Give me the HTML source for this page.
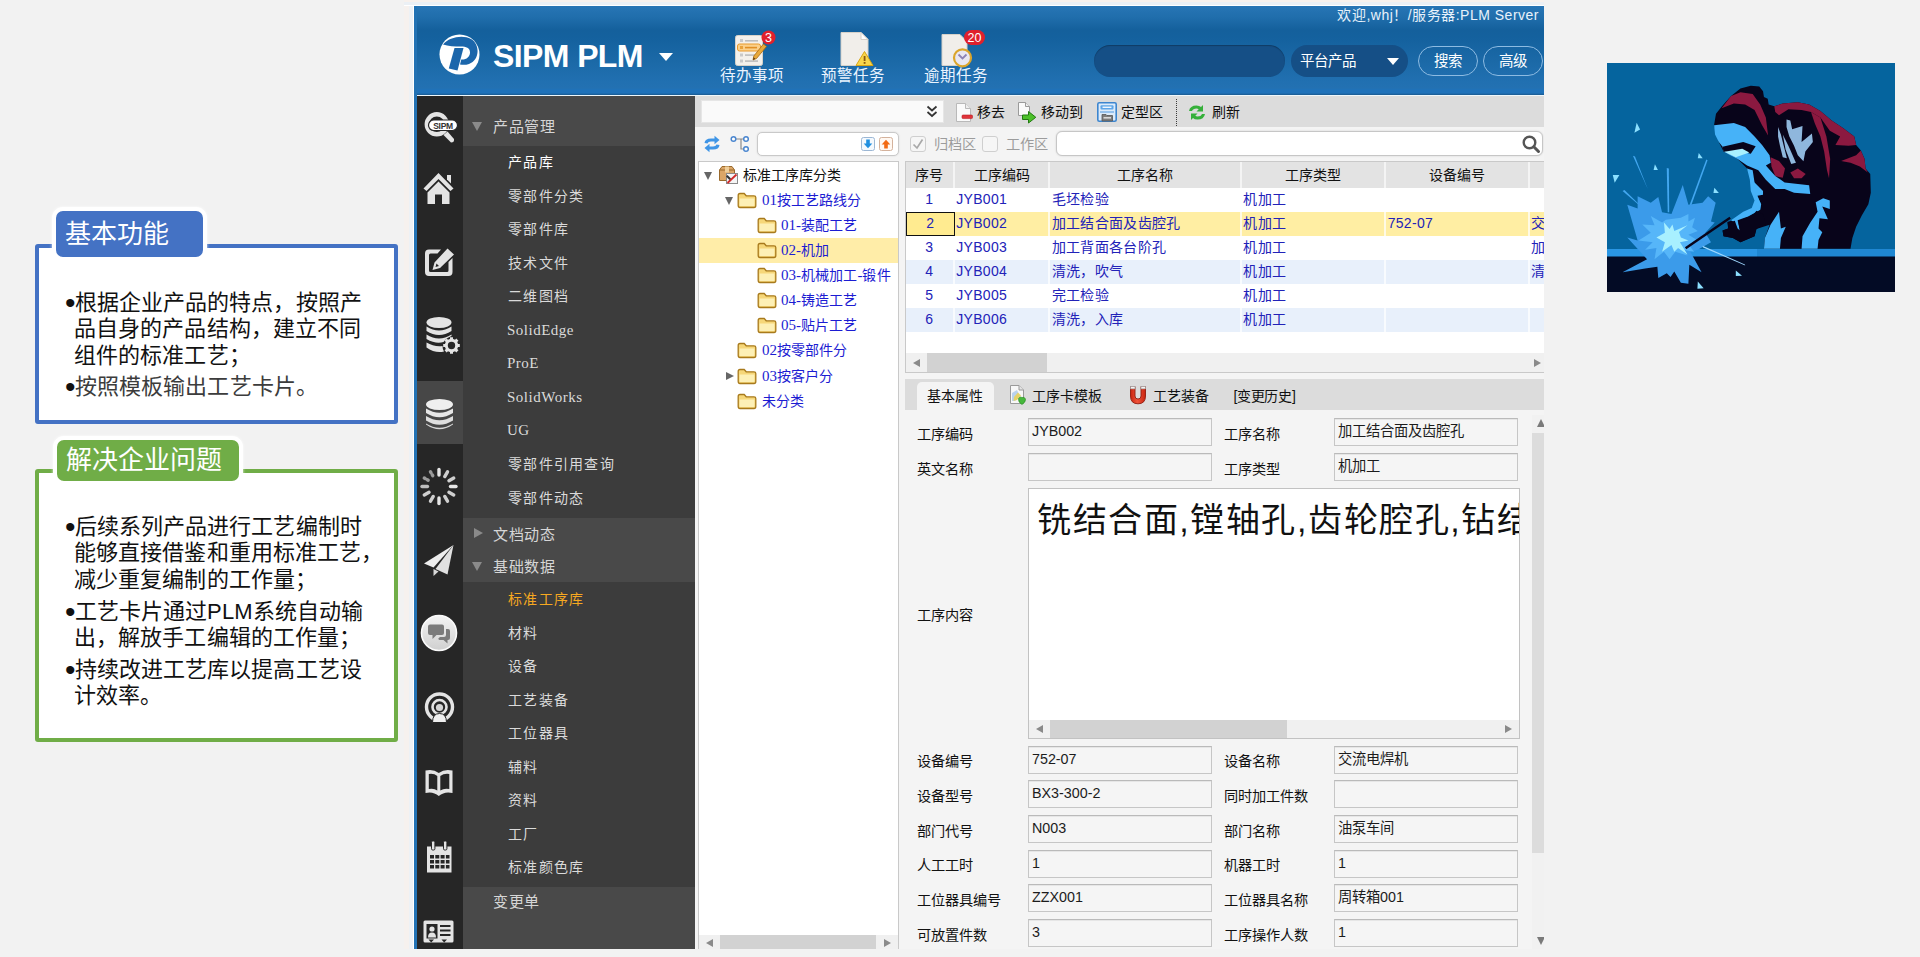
<!DOCTYPE html>
<html lang="zh-CN">
<head>
<meta charset="utf-8">
<title>SIPM PLM</title>
<style>
*{box-sizing:border-box;margin:0;padding:0}
html,body{width:1920px;height:957px;overflow:hidden;background:#f2f2f2;font-family:"Liberation Sans",sans-serif;}
.abs{position:absolute}
/* ---------- left callout boxes ---------- */
.box{position:absolute;left:35px;width:363px;background:#fff;border-radius:3px}
.box.b1{top:244px;height:180px;border:4px solid #4472c4}
.box.b2{top:469px;height:273px;border:4px solid #70ad47}
.lab{position:absolute;color:#fff;font-size:26px;line-height:46px;border:4px solid #fff;border-radius:11px;white-space:nowrap;box-shadow:0 0 3px rgba(255,255,255,.9)}
.lab.l1{left:52px;top:207px;width:155px;height:54px;background:#4472c4;padding-left:9px}
.lab.l2{left:53px;top:436px;width:190px;height:49px;background:#70ad47;padding-left:9px;line-height:40px}
.bul{position:absolute;left:65px;font-size:22px;line-height:26.3px;color:#111;white-space:nowrap;letter-spacing:.1px}
.bul .bu{font-weight:normal;font-size:30px;line-height:20px;vertical-align:-3px;letter-spacing:0;margin-right:-1px;font-family:"Liberation Sans",sans-serif}
.bul .in{padding-left:9px;display:block}
.bul .kai{font-family:"Liberation Serif",serif;color:#3c3c3c;letter-spacing:.15px}
.bul .kai .bu{color:#111}
/* ---------- app frame ---------- */
#app{position:absolute;left:414px;top:6px;width:1130px;height:943px;background:#f4f4f4;overflow:hidden}
#lb{position:absolute;left:0;top:0;width:2.5px;height:943px;background:#2272b4;z-index:5}
#hdr{position:absolute;left:0;top:0;width:1130px;height:89px;background:linear-gradient(#2775b5 0,#206eac 11px,#14609c 24px,#14619e 32px,#1b69a7 55px,#2170b1 76px,#2371b2 82px,#1f72ba 84px,#1f72ba 87px,#1b5f99 88.500px,#1b5f99 89px)}
#hl{position:absolute;left:0;top:89px;width:1130px;height:1px;background:#eef7fc}

/* ---------- header ---------- */
#logo{position:absolute;left:25px;top:28px;width:41px;height:41px}
#ttl{position:absolute;left:79px;top:31.5px;font-size:32px;font-weight:bold;color:#fff;line-height:36px;letter-spacing:-0.6px;white-space:nowrap}
#tri{position:absolute;left:245px;top:47px;width:0;height:0;border-left:7px solid transparent;border-right:7px solid transparent;border-top:8px solid #fff}
.hi{position:absolute;top:62px;width:80px;text-align:center;color:#eaf4ff;font-size:15.5px;line-height:16px;white-space:nowrap;letter-spacing:0}
.hico{position:absolute}
#wel{position:absolute;right:5px;top:1px;color:#e8f2fb;font-size:14px;line-height:16px;white-space:nowrap;letter-spacing:0.5px}
#sin{position:absolute;left:680px;top:39px;width:191px;height:32px;border-radius:16px;background:#154f86;box-shadow:inset 0 1px 1px rgba(0,0,0,.25)}
#sel{position:absolute;left:877px;top:39px;width:117px;height:32px;border-radius:16px;background:#154f86;color:#fff;font-size:14.5px;line-height:32px;padding-left:9px}
#sel i{position:absolute;left:96px;top:13px;width:0;height:0;border-left:6px solid transparent;border-right:6px solid transparent;border-top:7px solid #fff}
.hb{position:absolute;top:40px;width:60px;height:30px;border-radius:15px;border:1px solid #8dbbe2;color:#fff;font-size:14.5px;line-height:28px;text-align:center}

/* ---------- sidebar ---------- */
#strip{position:absolute;left:2px;top:90px;width:47px;height:853px;background:#262626}
#strip .sel{position:absolute;left:0;top:285px;width:47px;height:63px;background:#474747}
#strip svg{position:absolute;left:0;top:0}
#menu{position:absolute;left:49px;top:90px;width:232px;height:853px;background:#3c3c3c;color:#dadada;font-size:14px;letter-spacing:1.3px;white-space:nowrap}
#menu .h{position:absolute;left:0;width:232px;background:#494949;color:#d6d6d6}
#menu .h span{position:absolute;left:30px;font-size:15px;letter-spacing:.6px}
#menu .h i{position:absolute;left:9px;width:0;height:0}
#menu .h i.d{border-left:5.5px solid transparent;border-right:5.5px solid transparent;border-top:9px solid #8a8a8a}
#menu .h i.r{border-top:5.5px solid transparent;border-bottom:5.5px solid transparent;border-left:9px solid #8a8a8a;left:11px}
#menu .it{position:absolute;left:45px;height:20px;line-height:20px}
#menu .it.s{font-family:"Liberation Serif",serif;font-size:15px;letter-spacing:.5px;left:44px}
#menu .it.o{color:#f6a821}

/* ---------- main panel ---------- */
#main{position:absolute;left:281px;top:90px;width:849px;height:853px;background:#f4f4f4;font-size:14px;color:#111;white-space:nowrap}
#tb1{position:absolute;left:0;top:0;width:849px;height:31px;background:#dcdcdc}
#combo{position:absolute;left:6px;top:4px;width:243px;height:23px;background:#fafafa;border:1px solid #e6e6e6}
.tbt{position:absolute;top:8px;line-height:16px;font-size:14px;color:#111}
.tbi{position:absolute}
#tin{position:absolute;left:62px;top:36px;width:142px;height:24px;border:1px solid #c9c9c9;border-radius:5px;background:#fff;box-shadow:0 0 2px rgba(0,0,0,.12)}
#sin2{position:absolute;left:361px;top:35px;width:487px;height:25px;border:1px solid #c6c6c6;border-radius:6px;background:#fff;box-shadow:0 0 2px rgba(0,0,0,.15)}
.cb{position:absolute;top:40px;width:16px;height:16px;border:1px solid #cfcfcf;border-radius:3px;background:#f6f6f6}
.cbl{position:absolute;top:40px;line-height:16px;color:#9c9c9c;font-size:14.2px}

/* ---------- tree ---------- */
#tree{position:absolute;left:3px;top:65px;width:201px;height:788px;background:#fff;border:1px solid #c9c9c9;border-bottom:none;overflow:hidden}
#tree .r{position:absolute;left:0;width:199px;height:25px;line-height:25px;font-size:14px;color:#1c1cd2;letter-spacing:.1px}
#tree .r.sel{background:#ffeda8}
#tree .r span{position:absolute;top:0}
#tree .r span b{font-weight:normal;font-family:"Liberation Serif",serif;font-size:15px;letter-spacing:0}
#tree .r svg{position:absolute}
.tri-d{position:absolute;width:0;height:0;border-left:4.5px solid transparent;border-right:4.5px solid transparent;border-top:8px solid #666}
.tri-r{position:absolute;width:0;height:0;border-top:4.5px solid transparent;border-bottom:4.5px solid transparent;border-left:8px solid #666}
.hsb{position:absolute;background:#f0f0f0}
.hsb i{position:absolute;top:0;background:#d2d2d2}
.arr{position:absolute;width:0;height:0}
/* ---------- grid ---------- */
#grid{position:absolute;left:210px;top:65px;width:639px;height:212px;background:#fff;border:1px solid #c9c9c9;border-right:none;overflow:hidden}
#grid .hd{position:absolute;left:0;top:0;height:25.5px;width:640px;background:#e3e3e3}
#grid .hd div{position:absolute;top:0;height:25.5px;line-height:26px;text-align:center;font-size:14px;color:#111;border-right:2px solid #f4f4f4}
#grid .row{position:absolute;left:0;width:640px;height:24px;line-height:23px;font-size:14px;letter-spacing:.3px;color:#2222b8}
#grid .row div{position:absolute;top:0;height:24px;border-right:2px solid rgba(255,255,255,.7)}
#grid .row.a{background:#e8f0fb}
#grid .row.y{background:#ffeea3}

/* ---------- tabs + form ---------- */
#tabs{position:absolute;left:210px;top:283px;width:639px;height:31px;background:#dcdcdc}
#tabs .act{position:absolute;left:12px;top:3px;width:77px;height:28px;background:#f4f4f4;border-radius:5px 5px 0 0}
#tabs .t{position:absolute;top:9px;line-height:16px;font-size:14px;color:#111}
#tabs svg{position:absolute}
.fl{position:absolute;line-height:16px;font-size:14.2px;color:#111}
.fi{position:absolute;width:184px;height:28px;border:1px solid #c6c6c6;border-top-color:#bababa;background:#f5f5f5;box-shadow:inset 0 1px 0 #e6e6e6;font-size:14.3px;line-height:25px;padding-left:3px;color:#1c1c1c}
#ta{position:absolute;left:333px;top:392px;width:492px;height:251px;border:1px solid #c2c2c2;background:#fff;overflow:hidden}
#ta .tx{position:absolute;left:8px;top:9px;font-size:34px;line-height:44px;letter-spacing:1.57px;color:#111;white-space:nowrap}
#vsb{position:absolute;left:837px;top:319px;width:12px;height:534px;background:#f1f1f1}
#vsb i{position:absolute;left:0;top:17.500px;width:12px;height:420px;background:#dcdcdc}
</style>
</head>
<body>
<!-- left callouts -->
<div class="box b1"></div>
<div class="lab l1">基本功能</div>
<div class="bul" style="top:290px"><span><b class="bu">•</b>根据企业产品的特点，按照产</span><span class="in">品自身的产品结构，建立不同</span><span class="in">组件的标准工艺；</span></div>
<div class="bul" style="top:374px"><span class="kai"><b class="bu">•</b>按照模板输出工艺卡片。</span></div>
<div class="box b2"></div>
<div class="lab l2">解决企业问题</div>
<div class="bul" style="top:514px"><span><b class="bu">•</b>后续系列产品进行工艺编制时</span><span class="in">能够直接借鉴和重用标准工艺，</span><span class="in">减少重复编制的工作量；</span></div>
<div class="bul" style="top:599px"><span><b class="bu">•</b>工艺卡片通过PLM系统自动输</span><span class="in">出，解放手工编辑的工作量；</span></div>
<div class="bul" style="top:657px"><span><b class="bu">•</b>持续改进工艺库以提高工艺设</span><span class="in">计效率。</span></div>

<div style="position:absolute;left:404px;top:0;width:1140px;height:949px;background:linear-gradient(#f7f1ed 0,#f7f1ed 2px,#ebf0f5 2px,#ebf0f5 5px,#fff 5px,#fff 6px,transparent 6px),linear-gradient(90deg,#f6f1ee 0,#f6f1ee 5px,#edf1f5 5px,#edf1f5 9px,#fff 9px,#fff 10px,transparent 10px)"></div>
<div id="app">
 <div id="hdr"></div>

 <svg id="logo" viewBox="0 0 41 41">
  <circle cx="20.5" cy="20.5" r="20" fill="#fff"/>
  <path d="M4 10.500 C10 3 24 .500 32 5 C42 11 40 27 30 30 C27 31 24 31 21 30.500 L22.300 25.500 C27 26 31 23 31 18.500 C31 14 27 12.600 22 12.600 C16 12.600 9 12.200 4 10.500 Z" fill="#1b66ab"/>
  <path d="M15.500 14 L24.500 14 L18.500 36.600 L9.800 34.600 Z" fill="#1b66ab"/>
 </svg>
 <div id="ttl">SIPM PLM</div>
 <div id="tri"></div>

 <!-- todo icon -->
 <svg class="hico" style="left:320px;top:24px" width="46" height="40" viewBox="0 0 46 40">
  <rect x="1.5" y="5.5" width="27" height="30" rx="2" fill="#f4f1ec" stroke="#d8d2c8"/>
  <rect x="6" y="9" width="3" height="3" fill="#c9c9c9"/><rect x="11" y="10" width="13" height="1.6" fill="#bdbdbd"/>
  <rect x="3.5" y="14" width="23" height="7" rx="2" fill="#fbd08a" stroke="#e89a2c"/>
  <rect x="6" y="16" width="3" height="3" fill="#e9a23c"/><rect x="11" y="16.8" width="12" height="1.6" fill="#e18f25"/>
  <rect x="6" y="23.5" width="3" height="3" fill="#c9c9c9"/><rect x="11" y="24.3" width="11" height="1.6" fill="#bdbdbd"/>
  <rect x="6" y="29.5" width="3" height="3" fill="#c9c9c9"/><rect x="11" y="30.3" width="13" height="1.6" fill="#bdbdbd"/>
  <path d="M29.5 14 L32.5 16.5 L22.5 28.5 L19 30 L19.8 26 Z" fill="#e9a93a" stroke="#a86a12" stroke-width=".8"/>
  <path d="M19 30 L19.6 27.3 L21.3 28.8 Z" fill="#5a3a10"/>
  <circle cx="34.5" cy="7.5" r="7" fill="#e0202c"/>
  <text x="34.5" y="12" font-size="12.5" font-family="Liberation Sans, sans-serif" fill="#fff" text-anchor="middle">3</text>
 </svg>
 <div class="hi" style="left:298px">待办事项</div>

 <!-- warning doc icon -->
 <svg class="hico" style="left:424px;top:24px" width="40" height="40" viewBox="0 0 40 40">
  <path d="M3 2.5 H23 L30 9.5 V35.5 H3 Z" fill="#f1eeea" stroke="#d6d1c9"/>
  <path d="M23 2.5 V9.5 H30 Z" fill="#fff" stroke="#d6d1c9"/>
  <path d="M26.5 21.5 L35 35.5 H18 Z" fill="#f8d64b" stroke="#d9a514" stroke-linejoin="round"/>
  <rect x="25.7" y="26" width="1.8" height="5" fill="#8a5a10"/><rect x="25.7" y="32" width="1.8" height="1.8" fill="#8a5a10"/>
 </svg>
 <div class="hi" style="left:399px">预警任务</div>

 <!-- overdue icon -->
 <svg class="hico" style="left:525px;top:20px" width="50" height="46" viewBox="0 0 50 46">
  <path d="M3 8.5 H21 L28 15.5 V39.5 H3 Z" fill="#f1eeea" stroke="#d6d1c9"/>
  <circle cx="23.5" cy="31.8" r="8.5" fill="#e9e7f2" stroke="#dba52b" stroke-width="2.2"/>
  <path d="M19.5 28.5 L23.5 32.5 L27.5 28.5" fill="none" stroke="#8d83b5" stroke-width="1.8"/>
  <rect x="25" y="4" width="21" height="15" rx="7.5" fill="#e0202c"/>
  <text x="35.5" y="16" font-size="12.5" font-family="Liberation Sans, sans-serif" fill="#fff" text-anchor="middle">20</text>
 </svg>
 <div class="hi" style="left:502px">逾期任务</div>

 <div id="wel">欢迎,whj！/服务器:PLM Server</div>
 <div id="sin"></div>
 <div id="sel">平台产品<i></i></div>
 <div class="hb" style="left:1004px">搜索</div>
 <div class="hb" style="left:1069px">高级</div>
 <div id="hl"></div>
 <div id="lb"></div>

 <div id="strip"><div class="sel"></div>
 <svg width="47" height="853" viewBox="416 96 47 853">
  <defs><linearGradient id="ig" x1="0" y1="0" x2="0" y2="1"><stop offset="0" stop-color="#f4f4f4"/><stop offset="1" stop-color="#cfcfcf"/></linearGradient></defs>
  <g fill="#e4e4e4" stroke="none">
  <!-- 1 search SIPM -->
  <circle cx="436.8" cy="124.3" r="10" fill="none" stroke="#e4e4e4" stroke-width="4.4"/>
  <path d="M443.5 135 L447.5 131.5 L454 139 Q454.5 142.500 451 142.500 Z"/>
  <rect x="428.5" y="120" width="29" height="10.500" rx="5.200" fill="#fff" stroke="#262626" stroke-width="1.2"/>
  <text x="443" y="128.700" font-size="8.5" font-weight="bold" font-family="Liberation Sans, sans-serif" fill="#333" text-anchor="middle" letter-spacing="-.3">SIPM</text>
  <!-- 2 home -->
  <path d="M438.5 173 L453.5 188.5 L450.5 191 L438.5 179 L426.5 191 L423.5 188.5 Z"/>
  <path d="M447 175 H451 V183.5 L447 179.5 Z"/>
  <path d="M438.5 181.5 L449.5 192.5 V204 H442 V194.5 H435 V204 H427.5 V192.5 Z"/>
  <!-- 3 edit -->
  <path d="M429 249.5 H441 L437.5 253.5 H430.5 Q429 253.5 429 255 V270.5 Q429 272 430.5 272 H447 Q448.5 272 448.5 270.5 V262 L452.5 258 V272 Q452.5 276 448.5 276 H429 Q425 276 425 272 V253.5 Q425 249.5 429 249.5 Z"/>
  <path d="M447.5 248.5 L454 254.5 L440 268 L432.5 270 L434.5 262.5 Z M436.5 263.5 L435.5 267 L439 266 Z" fill-rule="evenodd"/>
  <!-- 4 db gear -->
  <ellipse cx="439" cy="322.5" rx="12.5" ry="5.5"/>
  <path d="M426.5 326.5 Q439 334.5 451.5 326.5 V331 Q439 339 426.5 331 Z"/>
  <path d="M426.5 334.5 Q439 342.5 451.5 334.5 V336 Q446 338 443.5 342 Q436 344.5 426.5 339 Z"/>
  <path d="M426.5 342.5 Q434 347 442.5 346 Q442.5 349 444 351.5 Q435 353.5 426.5 347.5 Z"/>
  <g transform="translate(451.5 345.5)"><circle r="5.2" fill="none" stroke="#e4e4e4" stroke-width="3"/><g stroke="#e4e4e4" stroke-width="3"><path d="M0 -8.3 V-5 M0 8.3 V5 M-8.3 0 H-5 M8.3 0 H5 M-5.9 -5.9 L-3.6 -3.6 M5.9 5.9 L3.6 3.6 M-5.9 5.9 L-3.6 3.6 M5.9 -5.9 L3.6 -3.6"/></g></g>
  <!-- 5 db (selected) -->
  <ellipse cx="439.5" cy="404.5" rx="13.5" ry="5.5" fill="#efefef"/>
  <path d="M426 408.5 Q439.5 417 453 408.5 V413 Q439.5 421.5 426 413 Z" fill="#e6e6e6"/>
  <path d="M426 416 Q439.5 424.5 453 416 V420.5 Q439.5 429 426 420.5 Z" fill="#dedede"/>
  <path d="M426 423.5 Q439.5 432 453 423.5 V424.5 Q439.5 434 426 424.5 Z" fill="#d6d6d6"/>
  <!-- 6 spinner -->
  <g transform="translate(439 486.5)" stroke="#cfcfcf" stroke-width="3.4" stroke-linecap="round">
   <path d="M0 -17 V-11.5" stroke="#e6e6e6"/><path d="M0 -17 V-11.5" transform="rotate(30)"/><path d="M0 -17 V-11.5" transform="rotate(60)"/><path d="M0 -17 V-11.5" transform="rotate(90)" stroke="#e6e6e6"/><path d="M0 -17 V-11.5" transform="rotate(120)"/><path d="M0 -17 V-11.5" transform="rotate(150)"/><path d="M0 -17 V-11.5" transform="rotate(180)" stroke="#e6e6e6"/><path d="M0 -17 V-11.5" transform="rotate(210)"/><path d="M0 -17 V-11.5" transform="rotate(240)"/><path d="M0 -17 V-11.5" transform="rotate(270)" stroke="#bdbdbd"/><path d="M0 -17 V-11.5" transform="rotate(300)" stroke="#9a9a9a" stroke-dasharray="1 2.5"/><path d="M0 -17 V-11.5" transform="rotate(330)" stroke="#9a9a9a" stroke-dasharray="1 2.5"/>
  </g>
  <!-- 7 paper plane -->
  <path d="M453.5 545 L424 563.5 L433.5 567.5 Z" fill="#ededed"/>
  <path d="M453.5 545 L435.5 569 L447.5 574.5 Z" fill="#e0e0e0"/>
  <path d="M433.5 569 L438.5 571.5 L433.5 576 Z" fill="#d8d8d8"/>
  <!-- 8 chat -->
  <circle cx="439" cy="633" r="17.5" fill="url(#ig)" stroke="#fafafa" stroke-width="1.6"/>
  <path d="M430 624.5 H442 Q444 624.5 444 626.5 V633 Q444 635 442 635 H436.5 L432.5 639 V635 H430 Q428 635 428 633 V626.5 Q428 624.5 430 624.5 Z" fill="#7b7b7b"/>
  <path d="M446 629 H448 Q450 629 450 631 V638 Q450 640 448 640 H447.5 V643.5 L443.5 640 H440 Q438.5 640 438.3 638.5 L440 637 H444 Q446 637 446 635 Z" fill="#7b7b7b"/>
  <!-- 9 broadcast user -->
  <circle cx="439.5" cy="707" r="13" fill="none" stroke="#e4e4e4" stroke-width="3.4"/>
  <circle cx="439.5" cy="707" r="7" fill="none" stroke="#e4e4e4" stroke-width="2.6"/>
  <circle cx="439.5" cy="707.5" r="3.6" fill="#d6d6d6"/>
  <path d="M432.5 722.5 Q432.5 713.5 439.5 713.5 Q446.5 713.5 446.5 722.5 Z" fill="#efefef" stroke="#262626" stroke-width="1"/>
  <!-- 10 book -->
  <path d="M425.5 770.5 Q433 768.5 438.8 773 Q444.6 768.5 452.5 770.5 V793 Q444.6 791 438.8 796 Q433 791 425.5 793 Z M428.8 774 V789 Q434 788 437.3 790.5 V776 Q434 773.2 428.8 774 Z M449.3 774 Q444 773.2 440.3 776 V790.5 Q444 788 449.3 789 Z" fill-rule="evenodd"/>
  <!-- 11 calendar -->
  <path d="M427 846.5 H451.5 V872.5 H427 Z M430 855 H434 V858.6 H430 Z M435.3 855 H439.3 V858.6 H435.3 Z M440.6 855 H444.6 V858.6 H440.6 Z M445.9 855 H449.5 V858.6 H445.9 Z M430 860 H434 V863.6 H430 Z M435.3 860 H439.3 V863.6 H435.3 Z M440.6 860 H444.6 V863.6 H440.6 Z M445.9 860 H449.5 V863.6 H445.9 Z M430 865 H434 V868.6 H430 Z M435.3 865 H439.3 V868.6 H435.3 Z M440.6 865 H444.6 V868.6 H440.6 Z M445.9 865 H449.5 V868.6 H445.9 Z" fill-rule="evenodd"/>
  <rect x="431.5" y="841" width="3.4" height="9" rx="1.2" stroke="#262626" stroke-width="1"/>
  <rect x="443.5" y="841" width="3.4" height="9" rx="1.2" stroke="#262626" stroke-width="1"/>
  <!-- 12 id card -->
  <path d="M425 920.5 H452 Q453.5 920.5 453.5 922 V941 Q453.5 942.5 452 942.5 H425 Q423.5 942.5 423.5 941 V922 Q423.5 920.5 425 920.5 Z M426.5 924 V938.5 H437.5 V924 Z M440 925 V927 H450.5 V925 Z M440 929.5 V931.5 H450.5 V929.5 Z M440 934 V936 H450.5 V934 Z" fill-rule="evenodd"/>
  <circle cx="432" cy="929" r="2.6"/><path d="M428 937.5 Q428 932.5 432 932.5 Q436 932.5 436 937.5 Z"/>
  <path d="M428.500 939.500 H434 L431.200 942.500 Z M441.500 939.500 H447 L444.200 942.500 Z" fill="#262626"/>
  </g>
 </svg></div>
 <div id="menu">
  <div class="h" style="top:0;height:50px"><i class="d" style="top:26px"></i><span style="top:20.5px;line-height:20px">产品管理</span></div>
  <div class="it" style="top:56.0px;color:#fff">产品库</div>
  <div class="it" style="top:89.6px">零部件分类</div>
  <div class="it" style="top:123.1px">零部件库</div>
  <div class="it" style="top:156.6px">技术文件</div>
  <div class="it" style="top:190.2px">二维图档</div>
  <div class="it s" style="top:223.8px">SolidEdge</div>
  <div class="it s" style="top:257.3px">ProE</div>
  <div class="it s" style="top:290.8px">SolidWorks</div>
  <div class="it s" style="top:324.4px">UG</div>
  <div class="it" style="top:357.9px">零部件引用查询</div>
  <div class="it" style="top:391.5px">零部件动态</div>
  <div class="h" style="top:422px;height:64px"><i class="r" style="top:10px"></i><span style="top:7px;line-height:20px">文档动态</span><i class="d" style="top:44px"></i><span style="top:39px;line-height:20px">基础数据</span></div>
  <div class="it o" style="top:493.0px">标准工序库</div>
  <div class="it" style="top:526.5px">材料</div>
  <div class="it" style="top:560.0px">设备</div>
  <div class="it" style="top:593.5px">工艺装备</div>
  <div class="it" style="top:627.0px">工位器具</div>
  <div class="it" style="top:660.5px">辅料</div>
  <div class="it" style="top:694.0px">资料</div>
  <div class="it" style="top:727.5px">工厂</div>
  <div class="it" style="top:761.0px">标准颜色库</div>
  <div class="h" style="top:791px;height:62px"><span style="top:5px;line-height:20px">变更单</span></div>
 </div>

 <div id="main">
  <div id="tb1"></div>
  <div id="combo"></div>
  <svg class="tbi" style="left:231px;top:9px" width="12" height="14" viewBox="0 0 12 14"><path d="M1.5 1.5 L6 5.5 L10.5 1.5 M1.5 7 L6 11 L10.5 7" fill="none" stroke="#333" stroke-width="1.7"/></svg>
  <!-- remove -->
  <svg class="tbi" style="left:260px;top:7px" width="18" height="20" viewBox="0 0 18 20"><path d="M1.5 .5 H10.5 L15.5 5.5 V18.5 H1.5 Z" fill="#fafafa" stroke="#b9b9b9"/><path d="M10.5 .5 V5.5 H15.5" fill="#eee" stroke="#b9b9b9"/><rect x="7" y="12" width="10.5" height="3.6" rx="1" fill="#e0343a" stroke="#b91c22" stroke-width=".6"/></svg>
  <div class="tbt" style="left:282px">移去</div>
  <!-- move to -->
  <svg class="tbi" style="left:322px;top:6px" width="20" height="22" viewBox="0 0 20 22"><path d="M1.5 .5 H8.5 L12.5 4.5 V13.5 H1.5 Z" fill="#fafafa" stroke="#9a9a9a"/><path d="M8.5 .5 V4.5 H12.5" fill="#eee" stroke="#9a9a9a"/><path d="M5.5 13 H11.5 V9.5 L18.8 15.3 L11.5 21 V17.5 H5.5 Z" fill="#4cc02a" stroke="#217a10" stroke-width="1" stroke-linejoin="round"/></svg>
  <div class="tbt" style="left:346px">移动到</div>
  <!-- finalize -->
  <svg class="tbi" style="left:402px;top:6px" width="20" height="20" viewBox="0 0 20 20"><rect x=".8" y=".8" width="18.4" height="18.4" rx="1.5" fill="#dcebfa" stroke="#3d86cf" stroke-width="1.6"/><rect x="3.5" y="3.2" width="13" height="4.2" rx="1" fill="#5ea6e8"/><rect x="5.5" y="4.6" width="9" height="1.3" fill="#fff"/><rect x="3" y="9.2" width="14" height="1.6" fill="#86b9ea"/><path d="M5 12.5 H9 L10 13.5 H15.5 V19 H5 Z" fill="#7d7d7d" stroke="#555" stroke-width=".8"/><rect x="6.5" y="15" width="7.5" height="1.6" fill="#d8d8d8"/></svg>
  <div class="tbt" style="left:425.5px">定型区</div>
  <div style="position:absolute;left:481px;top:3px;width:0;height:27px;border-left:1.5px dotted #3a3a3a"></div>
  <!-- refresh -->
  <svg class="tbi" style="left:493px;top:8px" width="18" height="17" viewBox="0 0 18 17"><path d="M1 7 Q2 1.5 8.5 1.5 Q11.5 1.5 13 3 L15 1 V7.5 H8.5 L10.7 5.3 Q9.8 4.5 8.5 4.5 Q5 4.5 4 7 Z" fill="#35b03a"/><path d="M17 10 Q16 15.5 9.5 15.5 Q6.5 15.5 5 14 L3 16 V9.5 H9.5 L7.3 11.7 Q8.2 12.5 9.5 12.5 Q13 12.5 14 10 Z" fill="#35b03a"/></svg>
  <div class="tbt" style="left:517px">刷新</div>

  <!-- row 2 -->
  <svg class="tbi" style="left:8px;top:39px" width="18" height="18" viewBox="0 0 18 18"><path d="M1.5 8 Q2 3.5 8 3.5 H11.5 V.8 L16.5 5 L11.5 9.2 V6.5 H8 Q5 6.5 4.5 8.5 Z" fill="#3f95e6"/><path d="M16.5 10 Q16 14.5 10 14.5 H6.5 V17.2 L1.5 13 L6.5 8.8 V11.500 H10 Q13 11.5 13.5 9.5 Z" fill="#3f95e6"/></svg>
  <svg class="tbi" style="left:35px;top:39px" width="20" height="18" viewBox="0 0 20 18"><g fill="#fff" stroke="#4a86cf" stroke-width="1.5"><path d="M5 4 H11 V14 H14 M11 4 H14" fill="none" stroke="#8a8a8a" stroke-width="1.2"/><circle cx="3.5" cy="4" r="2.3"/><circle cx="16" cy="4" r="2.3"/><circle cx="16" cy="14" r="2.3"/></g></svg>
  <div id="tin"></div>
  <svg class="tbi" style="left:166px;top:41px" width="14" height="14" viewBox="0 0 14 14"><rect x=".5" y=".5" width="13" height="13" rx="2" fill="#f4f9fe" stroke="#9cb7d4"/><path d="M5.2 2.5 H8.8 V6.5 H11.3 L7 11.3 L2.7 6.5 H5.2 Z" fill="#1f8fe0"/></svg>
  <svg class="tbi" style="left:184px;top:41px" width="14" height="14" viewBox="0 0 14 14"><rect x=".5" y=".5" width="13" height="13" rx="2" fill="#fff8f2" stroke="#d4b29c"/><path d="M5.2 11.5 H8.8 V7.500 H11.3 L7 2.700 L2.7 7.500 H5.2 Z" fill="#f26a12"/></svg>
  <div class="cb" style="left:215px"><svg width="14" height="14" viewBox="0 0 14 14" style="position:absolute;left:0;top:0"><path d="M2.500 7.500 L6 11 L11.5 2.500" fill="none" stroke="#a9a9a9" stroke-width="1.7"/></svg></div>
  <div class="cbl" style="left:238.5px">归档区</div>
  <div class="cb" style="left:287px"></div>
  <div class="cbl" style="left:311px">工作区</div>
  <div id="sin2"><svg width="20" height="20" viewBox="0 0 20 20" style="position:absolute;right:1px;top:2px"><circle cx="8.5" cy="8.5" r="5.8" fill="none" stroke="#555" stroke-width="2.4"/><path d="M12.800 12.800 L17.5 17.500" stroke="#555" stroke-width="3" stroke-linecap="round"/></svg></div>
 <div id="tree">
  <div class="r" style="top:0.7px"><i class="tri-d" style="left:5px;top:9px"></i><svg style="left:19px;top:2px" width="21" height="21" viewBox="0 0 21 21"><path d="M1.500 5 L4 1.500 H14 L16.500 5 V15.500 H1.500 Z" fill="#dba667" stroke="#9a6a2c"/><path d="M1.500 5 H16.500" stroke="#9a6a2c"/><rect x="7" y="1.500" width="4" height="6" fill="#f0cf9a"/><rect x="8.500" y="8.500" width="11" height="10" fill="#f5f5f5" stroke="#8a8a8a"/><path d="M9.500 18 L18.500 9.500" stroke="#d02a2a" stroke-width="1.800"/><path d="M9.500 10 L13 13.500 L11.500 15 L8 11.500 Z" fill="#333"/></svg><span style="left:43.5px;color:#111">标准工序库分类</span></div>
  <div class="r" style="top:25.8px"><i class="tri-d" style="left:25.5px;top:9px"></i><svg style="left:38px;top:4px" width="20" height="17" viewBox="0 0 20 17"><path d="M1.2 3.5 Q1.2 1.5 3 1.5 H7.200 L9.200 3.800 H17 Q18.800 3.800 18.800 5.600 V13.500 Q18.800 15.500 17 15.500 H3 Q1.200 15.500 1.200 13.500 Z" fill="#f6d779" stroke="#a87a1c" stroke-width="1.300"/><path d="M2.600 6.500 H17.400 V13.300 Q17.400 14.100 16.600 14.100 H3.400 Q2.600 14.100 2.600 13.300 Z" fill="#fdf0b6"/></svg><span style="left:63px"><b>01</b>按工艺路线分</span></div>
  <div class="r" style="top:50.9px"><svg style="left:57.5px;top:4px" width="20" height="17" viewBox="0 0 20 17"><path d="M1.2 3.5 Q1.2 1.5 3 1.5 H7.200 L9.200 3.800 H17 Q18.800 3.800 18.800 5.600 V13.500 Q18.800 15.500 17 15.500 H3 Q1.200 15.500 1.200 13.500 Z" fill="#f6d779" stroke="#a87a1c" stroke-width="1.300"/><path d="M2.600 6.500 H17.400 V13.300 Q17.400 14.100 16.600 14.100 H3.400 Q2.600 14.100 2.600 13.300 Z" fill="#fdf0b6"/></svg><span style="left:82px"><b>01-</b>装配工艺</span></div>
  <div class="r sel" style="top:76.0px"><svg style="left:57.5px;top:4px" width="20" height="17" viewBox="0 0 20 17"><path d="M1.2 3.5 Q1.2 1.5 3 1.5 H7.200 L9.200 3.800 H17 Q18.800 3.800 18.800 5.600 V13.500 Q18.800 15.500 17 15.500 H3 Q1.200 15.500 1.200 13.500 Z" fill="#f6d779" stroke="#a87a1c" stroke-width="1.300"/><path d="M2.600 6.500 H17.400 V13.300 Q17.400 14.100 16.600 14.100 H3.400 Q2.600 14.100 2.600 13.300 Z" fill="#fdf0b6"/></svg><span style="left:82px"><b>02-</b>机加</span></div>
  <div class="r" style="top:101.1px"><svg style="left:57.5px;top:4px" width="20" height="17" viewBox="0 0 20 17"><path d="M1.2 3.5 Q1.2 1.5 3 1.5 H7.200 L9.200 3.800 H17 Q18.800 3.800 18.800 5.600 V13.500 Q18.800 15.500 17 15.500 H3 Q1.200 15.500 1.200 13.500 Z" fill="#f6d779" stroke="#a87a1c" stroke-width="1.300"/><path d="M2.600 6.500 H17.400 V13.300 Q17.400 14.100 16.600 14.100 H3.400 Q2.600 14.100 2.600 13.300 Z" fill="#fdf0b6"/></svg><span style="left:82px"><b>03-</b>机械加工<b>-</b>锻件</span></div>
  <div class="r" style="top:126.2px"><svg style="left:57.5px;top:4px" width="20" height="17" viewBox="0 0 20 17"><path d="M1.2 3.5 Q1.2 1.5 3 1.5 H7.200 L9.200 3.800 H17 Q18.800 3.800 18.800 5.600 V13.500 Q18.800 15.500 17 15.500 H3 Q1.200 15.500 1.200 13.500 Z" fill="#f6d779" stroke="#a87a1c" stroke-width="1.300"/><path d="M2.600 6.500 H17.400 V13.300 Q17.400 14.100 16.600 14.100 H3.400 Q2.600 14.100 2.600 13.300 Z" fill="#fdf0b6"/></svg><span style="left:82px"><b>04-</b>铸造工艺</span></div>
  <div class="r" style="top:151.3px"><svg style="left:57.5px;top:4px" width="20" height="17" viewBox="0 0 20 17"><path d="M1.2 3.5 Q1.2 1.5 3 1.5 H7.200 L9.200 3.800 H17 Q18.800 3.800 18.800 5.600 V13.500 Q18.800 15.500 17 15.500 H3 Q1.200 15.500 1.200 13.500 Z" fill="#f6d779" stroke="#a87a1c" stroke-width="1.300"/><path d="M2.600 6.500 H17.400 V13.300 Q17.400 14.100 16.600 14.100 H3.400 Q2.600 14.100 2.600 13.300 Z" fill="#fdf0b6"/></svg><span style="left:82px"><b>05-</b>贴片工艺</span></div>
  <div class="r" style="top:176.4px"><svg style="left:38px;top:4px" width="20" height="17" viewBox="0 0 20 17"><path d="M1.2 3.5 Q1.2 1.5 3 1.5 H7.200 L9.200 3.800 H17 Q18.800 3.800 18.800 5.600 V13.500 Q18.800 15.500 17 15.500 H3 Q1.200 15.500 1.200 13.500 Z" fill="#f6d779" stroke="#a87a1c" stroke-width="1.300"/><path d="M2.600 6.500 H17.400 V13.300 Q17.400 14.100 16.600 14.100 H3.400 Q2.600 14.100 2.600 13.300 Z" fill="#fdf0b6"/></svg><span style="left:63px"><b>02</b>按零部件分</span></div>
  <div class="r" style="top:201.5px"><i class="tri-r" style="left:26.5px;top:8px"></i><svg style="left:38px;top:4px" width="20" height="17" viewBox="0 0 20 17"><path d="M1.2 3.5 Q1.2 1.5 3 1.5 H7.200 L9.200 3.800 H17 Q18.800 3.800 18.800 5.600 V13.500 Q18.800 15.500 17 15.500 H3 Q1.200 15.500 1.200 13.500 Z" fill="#f6d779" stroke="#a87a1c" stroke-width="1.300"/><path d="M2.600 6.500 H17.400 V13.300 Q17.400 14.100 16.600 14.100 H3.400 Q2.600 14.100 2.600 13.300 Z" fill="#fdf0b6"/></svg><span style="left:63px"><b>03</b>按客户分</span></div>
  <div class="r" style="top:226.6px"><svg style="left:38px;top:4px" width="20" height="17" viewBox="0 0 20 17"><path d="M1.2 3.5 Q1.2 1.5 3 1.5 H7.200 L9.200 3.800 H17 Q18.800 3.800 18.800 5.600 V13.500 Q18.800 15.500 17 15.500 H3 Q1.200 15.500 1.200 13.500 Z" fill="#f6d779" stroke="#a87a1c" stroke-width="1.300"/><path d="M2.600 6.500 H17.400 V13.300 Q17.400 14.100 16.600 14.100 H3.400 Q2.600 14.100 2.600 13.300 Z" fill="#fdf0b6"/></svg><span style="left:63px">未分类</span></div>
  <div class="hsb" style="left:0;top:773px;width:199px;height:15px"><i style="left:21px;width:156px;height:15px"></i>
   <span class="arr" style="left:7px;top:3.500px;border-top:4.500px solid transparent;border-bottom:4.500px solid transparent;border-right:7px solid #8a8a8a"></span>
   <span class="arr" style="left:185px;top:3.500px;border-top:4.500px solid transparent;border-bottom:4.500px solid transparent;border-left:7px solid #8a8a8a"></span></div>
 </div>
 <div id="grid">
  <div class="hd"><div style="left:0.0px;width:48.8px">序号</div><div style="left:48.8px;width:95.5px">工序编码</div><div style="left:144.3px;width:191.5px">工序名称</div><div style="left:335.8px;width:144.4px">工序类型</div><div style="left:480.2px;width:143.7px">设备编号</div><div style="left:623.9px;width:30.1px"></div></div>
  <div class="row " style="top:25.5px"><div style="left:0.0px;width:48.8px;text-align:center;line-height:23px">1</div><div style="left:48.8px;width:95.5px;padding-left:1.500px">JYB001</div><div style="left:144.3px;width:191.5px;padding-left:1.500px">毛坯检验</div><div style="left:335.8px;width:144.4px;padding-left:1.500px">机加工</div><div style="left:480.2px;width:143.7px;padding-left:1.500px"></div><div style="left:623.9px;width:30.1px;padding-left:1.500px"></div></div>
  <div class="row y" style="top:49.5px"><div style="left:0.0px;width:48.8px;text-align:center;border:1.500px solid #111;background:#ffeb90;line-height:20px">2</div><div style="left:48.8px;width:95.5px;padding-left:1.500px">JYB002</div><div style="left:144.3px;width:191.5px;padding-left:1.500px">加工结合面及齿腔孔</div><div style="left:335.8px;width:144.4px;padding-left:1.500px">机加工</div><div style="left:480.2px;width:143.7px;padding-left:1.500px">752-07</div><div style="left:623.9px;width:30.1px;padding-left:1.500px">交</div></div>
  <div class="row " style="top:73.5px"><div style="left:0.0px;width:48.8px;text-align:center;line-height:23px">3</div><div style="left:48.8px;width:95.5px;padding-left:1.500px">JYB003</div><div style="left:144.3px;width:191.5px;padding-left:1.500px">加工背面各台阶孔</div><div style="left:335.8px;width:144.4px;padding-left:1.500px">机加工</div><div style="left:480.2px;width:143.7px;padding-left:1.500px"></div><div style="left:623.9px;width:30.1px;padding-left:1.500px">加</div></div>
  <div class="row a" style="top:97.5px"><div style="left:0.0px;width:48.8px;text-align:center;line-height:23px">4</div><div style="left:48.8px;width:95.5px;padding-left:1.500px">JYB004</div><div style="left:144.3px;width:191.5px;padding-left:1.500px">清洗，吹气</div><div style="left:335.8px;width:144.4px;padding-left:1.500px">机加工</div><div style="left:480.2px;width:143.7px;padding-left:1.500px"></div><div style="left:623.9px;width:30.1px;padding-left:1.500px">清</div></div>
  <div class="row " style="top:121.5px"><div style="left:0.0px;width:48.8px;text-align:center;line-height:23px">5</div><div style="left:48.8px;width:95.5px;padding-left:1.500px">JYB005</div><div style="left:144.3px;width:191.5px;padding-left:1.500px">完工检验</div><div style="left:335.8px;width:144.4px;padding-left:1.500px">机加工</div><div style="left:480.2px;width:143.7px;padding-left:1.500px"></div><div style="left:623.9px;width:30.1px;padding-left:1.500px"></div></div>
  <div class="row a" style="top:145.5px"><div style="left:0.0px;width:48.8px;text-align:center;line-height:23px">6</div><div style="left:48.8px;width:95.5px;padding-left:1.500px">JYB006</div><div style="left:144.3px;width:191.5px;padding-left:1.500px">清洗，入库</div><div style="left:335.8px;width:144.4px;padding-left:1.500px">机加工</div><div style="left:480.2px;width:143.7px;padding-left:1.500px"></div><div style="left:623.9px;width:30.1px;padding-left:1.500px"></div></div>
  <div class="hsb" style="left:0;top:191px;width:640px;height:20px"><i style="left:21px;width:120px;height:20px"></i>
   <span class="arr" style="left:7px;top:5.500px;border-top:4.500px solid transparent;border-bottom:4.500px solid transparent;border-right:7px solid #8a8a8a"></span>
   <span class="arr" style="left:628px;top:5.500px;border-top:4.500px solid transparent;border-bottom:4.500px solid transparent;border-left:7px solid #8a8a8a"></span></div>
 </div>
  <div id="tabs"><div class="act"></div><div class="t" style="left:22px">基本属性</div>
   <svg style="left:104px;top:6px" width="19" height="20" viewBox="0 0 19 20"><path d="M1.500 .500 H10 L14.500 5 V18.500 H1.500 Z" fill="#f7f7f7" stroke="#9a9a9a"/><path d="M10 .500 V5 H14.500" fill="#e4e4e4" stroke="#9a9a9a"/><path d="M3 8 L8 5 L11 12 L6 16 L3 16 Z" fill="#b9d2ee"/><path d="M5 12 L9 7.500 L12 10.500 L8 15 L4.500 16 Z" fill="#e9d25a" opacity=".9"/><path d="M9.500 13.500 Q11 11 13 12.500 Q15.500 11.500 16.500 14 Q17 17 13 19.500 Q9 17.500 9.500 13.500 Z" fill="#46b83c" stroke="#2a8a24" stroke-width=".6"/></svg>
   <div class="t" style="left:127px">工序卡模板</div>
   <svg style="left:224px;top:6px" width="18" height="20" viewBox="0 0 18 20"><defs><linearGradient id="mg" x1="0" y1="0" x2="1" y2="0"><stop offset="0" stop-color="#c8240f"/><stop offset=".45" stop-color="#f0533a"/><stop offset="1" stop-color="#c8240f"/></linearGradient></defs><path d="M1.500 1.500 H6 V11 Q6 14 9 14 Q12 14 12 11 V1.500 H16.500 V11 Q16.500 18.800 9 18.800 Q1.500 18.800 1.500 11 Z" fill="url(#mg)" stroke="#8e1a0c" stroke-width=".9"/><rect x="1.500" y="1.300" width="4.500" height="2.600" fill="#f3f3f3" stroke="#999" stroke-width=".6"/><rect x="12" y="1.300" width="4.500" height="2.600" fill="#f3f3f3" stroke="#999" stroke-width=".6"/></svg>
   <div class="t" style="left:247.500px">工艺装备</div>
   <div class="t" style="left:328.500px;letter-spacing:-.3px">[变更历史]</div>
  </div>
  <div class="fl" style="left:222px;top:329.5px">工序编码</div>
  <div class="fi" style="left:333px;top:322.0px">JYB002</div>
  <div class="fl" style="left:529px;top:329.5px">工序名称</div>
  <div class="fi" style="left:639px;top:322.0px">加工结合面及齿腔孔</div>
  <div class="fl" style="left:222px;top:364.5px">英文名称</div>
  <div class="fi" style="left:333px;top:357.0px"></div>
  <div class="fl" style="left:529px;top:364.5px">工序类型</div>
  <div class="fi" style="left:639px;top:357.0px">机加工</div>
  <div class="fl" style="left:222px;top:657.0px">设备编号</div>
  <div class="fi" style="left:333px;top:649.5px">752-07</div>
  <div class="fl" style="left:529px;top:657.0px">设备名称</div>
  <div class="fi" style="left:639px;top:649.5px">交流电焊机</div>
  <div class="fl" style="left:222px;top:691.7px">设备型号</div>
  <div class="fi" style="left:333px;top:684.2px">BX3-300-2</div>
  <div class="fl" style="left:529px;top:691.7px">同时加工件数</div>
  <div class="fi" style="left:639px;top:684.2px"></div>
  <div class="fl" style="left:222px;top:726.5px">部门代号</div>
  <div class="fi" style="left:333px;top:719.0px">N003</div>
  <div class="fl" style="left:529px;top:726.5px">部门名称</div>
  <div class="fi" style="left:639px;top:719.0px">油泵车间</div>
  <div class="fl" style="left:222px;top:761.2px">人工工时</div>
  <div class="fi" style="left:333px;top:753.7px">1</div>
  <div class="fl" style="left:529px;top:761.2px">机器工时</div>
  <div class="fi" style="left:639px;top:753.7px">1</div>
  <div class="fl" style="left:222px;top:795.9px">工位器具编号</div>
  <div class="fi" style="left:333px;top:788.4px">ZZX001</div>
  <div class="fl" style="left:529px;top:795.9px">工位器具名称</div>
  <div class="fi" style="left:639px;top:788.4px">周转箱001</div>
  <div class="fl" style="left:222px;top:830.6px">可放置件数</div>
  <div class="fi" style="left:333px;top:823.1px">3</div>
  <div class="fl" style="left:529px;top:830.6px">工序操作人数</div>
  <div class="fi" style="left:639px;top:823.1px">1</div>
  <div class="fl" style="left:222px;top:511.0px">工序内容</div>
  <div id="ta"><div class="tx">铣结合面,镗轴孔,齿轮腔孔,钻结合面孔</div>
   <div class="hsb" style="left:0;top:231px;width:490px;height:18px"><i style="left:21px;width:237px;height:18px"></i>
   <span class="arr" style="left:7px;top:4.500px;border-top:4.500px solid transparent;border-bottom:4.500px solid transparent;border-right:7px solid #8a8a8a"></span>
   <span class="arr" style="left:476px;top:4.500px;border-top:4.500px solid transparent;border-bottom:4.500px solid transparent;border-left:7px solid #8a8a8a"></span></div>
  </div>
  <div id="vsb"><i></i>
   <span class="arr" style="left:4.500px;top:4px;border-left:4.500px solid transparent;border-right:4.500px solid transparent;border-bottom:8px solid #7a7a7a"></span>
   <span class="arr" style="left:4.500px;top:522px;border-left:4.500px solid transparent;border-right:4.500px solid transparent;border-top:8px solid #7a7a7a"></span></div>

 </div>

</div>

<svg style="position:absolute;left:1607px;top:63px" width="288" height="229" viewBox="0 0 288 229">
 <rect width="288" height="229" fill="#05649e"/>
 <rect y="186" width="288" height="8" fill="#1f87d2"/>
 <rect y="186" width="150" height="8" fill="#2a96e4"/>
 <rect y="193.500" width="288" height="35.500" fill="#030b25"/>
 <g transform="translate(93 17) scale(.18811)">
  <!-- black body -->
  <path fill="#08041a" d="M75 238 L85 180 L120 135 L165 85 L215 45 L270 30 L315 35 L335 60 L340 90 L360 100 L365 130 L395 140 L440 125 L520 118 L580 130 L640 165 L700 215 L760 255 L820 300 L830 345 L855 375 L875 420 L880 470 L905 500 L908 600 L895 660 L860 720 L830 780 L810 840 L800 897 L340 897 L345 840 L370 770 L300 792 L290 830 L215 862 L175 840 L125 830 L120 800 L150 790 L145 755 L190 740 L255 725 L320 690 L325 660 L305 615 L290 545 L250 470 L200 420 L125 380 L100 330 Z"/>
  <!-- maroon -->
  <g fill="#8b1940">
   <path d="M115 150 L165 85 L215 65 L280 75 L320 130 L350 200 L362 295 L330 240 L290 160 L240 130 L180 125 Z"/>
   <path d="M395 140 L440 125 L520 118 L580 130 L640 165 L700 215 L760 255 L820 300 L830 345 L790 350 L720 345 L745 300 L690 270 L640 200 L590 170 L540 160 L470 155 L420 188 L400 170 Z"/>
   <path d="M855 375 L875 420 L880 470 L892 492 L850 460 L800 440 L750 430 L830 400 Z"/>
   <path d="M590 170 L640 200 L672 300 L692 420 L686 522 L675 480 L660 380 L640 300 L610 230 Z"/>
   <path d="M375 410 L420 430 L452 470 L440 520 L400 510 L380 460 Z"/>
   <path d="M480 492 L520 470 L562 500 L540 522 L500 522 Z"/>
  </g>
  <!-- pale chest -->
  <g fill="#8fb7dd">
   <path d="M460 210 L480 215 L490 262 L545 245 L540 330 L595 285 L600 330 L560 380 L550 432 L520 400 L500 350 L475 300 L460 250 Z"/>
   <path d="M415 250 L430 290 L445 350 L462 416 L440 410 L425 350 L415 300 Z"/>
   <path d="M440 290 L470 350 L510 440 L485 446 L455 370 Z"/>
  </g>
  <!-- light blue face + arm -->
  <g fill="#46b2f8">
   <path d="M75 240 L180 228 L240 250 L290 300 L330 345 L370 400 L376 440 L350 455 L400 510 L450 545 L580 560 L586 606 L500 600 L450 580 L400 580 L350 530 L310 480 L250 455 L200 420 L160 400 L125 380 L120 355 L100 330 L80 290 Z"/>
   <path d="M250 470 L280 480 L290 545 L335 590 L335 610 L305 615 L325 660 L320 690 L255 725 L200 745 L212 802 L190 790 L180 755 L165 745 L230 700 L275 680 L290 640 L270 590 L265 530 Z"/>
   <path d="M340 897 L345 840 L375 770 L420 700 L430 790 L456 780 L430 840 L425 897 Z"/>
   <path d="M540 897 L545 830 L585 760 L625 700 L615 650 L655 628 L690 640 L690 686 L650 672 L680 740 L635 735 L630 790 L650 810 L630 850 L625 897 Z"/>
  </g>
  <path fill="#08041a" d="M205 762 L218 745 L270 735 L300 695 L335 715 L350 765 L300 792 L290 830 L215 862 L175 840 L125 830 L120 800 L150 790 L148 760 L185 748 L200 790 L212 800 Z"/>
  <path fill="#08041a" d="M120 355 L230 330 L296 352 L270 392 L240 386 L125 381 Z"/>
  <path fill="#a9f1ff" d="M130 381 L225 366 L262 386 L190 410 Z"/>
 </g>
 <g transform="translate(-7 57) scale(.18809)">
  <!-- streaks -->
  <g fill="#43a7f0">
   <path d="M175 190 L186 194 L255 370 Z"/><path d="M355 255 L366 258 L368 490 L360 490 Z"/><path d="M565 210 L572 214 L482 462 L474 458 Z"/><path d="M120 377 L130 372 L240 480 Z"/>
  </g>
  <path fill="#3b9bea" d="M120 810 L250 740 L145 625 L200 640 L145 450 L200 470 L200 405 L270 440 L310 410 L330 490 L380 500 L440 345 L470 450 L545 440 L575 405 L615 440 L590 540 L610 545 L560 600 L590 650 L520 690 L480 700 L540 810 L475 770 L470 870 L430 865 L395 805 L375 835 L355 815 L310 840 L305 780 L240 790 Z"/>
  <path fill="#56b6f9" d="M205 640 L270 600 L225 555 L290 560 L270 510 L330 545 L350 530 L430 520 L470 500 L470 540 L505 520 L490 570 L520 590 L470 610 L520 640 L470 660 L500 700 L440 690 L465 720 L400 700 L370 740 L340 700 L290 740 L300 680 L240 690 L280 650 Z"/>
  <path fill="#a8f0ff" d="M300 625 L345 600 L340 545 L370 580 L385 555 L395 590 L465 560 L420 595 L430 625 L470 640 L425 650 L465 715 L415 680 L395 700 L380 665 L330 700 L345 650 Z"/>
  <g fill="#8ce0ff">
   <path d="M195 15 L213 50 L183 68 Z"/><path d="M525 175 L546 203 L520 203 Z"/><path d="M292 235 L308 266 L285 266 Z"/><path d="M68 293 L103 293 L78 333 Z"/><path d="M608 360 L632 388 L603 388 Z"/><path d="M722 800 L755 828 L722 830 Z"/><path d="M520 858 L551 895 L518 897 Z"/>
  </g>
  <path d="M455 682 L692 520" stroke="#08041a" stroke-width="13"/>
  <path fill="#9fd8ff" d="M545 668 L770 768 L772 773 L548 678 Z"/>
 </g>
</svg>

</body>
</html>
